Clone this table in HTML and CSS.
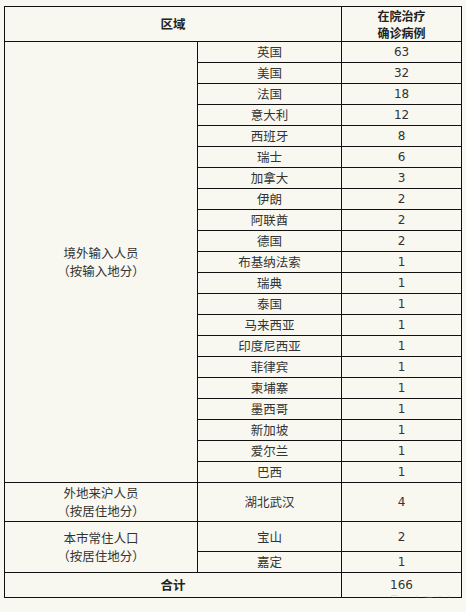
FILE: index.html
```html
<!DOCTYPE html>
<html lang="zh-CN">
<head>
<meta charset="utf-8">
<title>在院治疗确诊病例</title>
<link rel="stylesheet" href="styles.css">
</head>
<body>
<div class="wrap">
<table class="cases">
  <colgroup>
    <col class="c1"><col class="c2"><col class="c3">
  </colgroup>
  <tr class="head">
    <th colspan="2">区域</th>
    <th class="hd2"><span class="hl">在院治疗</span><span class="hl">确诊病例</span></th>
  </tr>
  <tr><td rowspan="21" class="group">境外输入人员<br>（按输入地分）</td><td>英国</td><td class="num">63</td></tr>
  <tr><td>美国</td><td class="num">32</td></tr>
  <tr><td>法国</td><td class="num">18</td></tr>
  <tr><td>意大利</td><td class="num">12</td></tr>
  <tr><td>西班牙</td><td class="num">8</td></tr>
  <tr><td>瑞士</td><td class="num">6</td></tr>
  <tr><td>加拿大</td><td class="num">3</td></tr>
  <tr><td>伊朗</td><td class="num">2</td></tr>
  <tr><td>阿联酋</td><td class="num">2</td></tr>
  <tr><td>德国</td><td class="num">2</td></tr>
  <tr><td>布基纳法索</td><td class="num">1</td></tr>
  <tr><td>瑞典</td><td class="num">1</td></tr>
  <tr><td>泰国</td><td class="num">1</td></tr>
  <tr><td>马来西亚</td><td class="num">1</td></tr>
  <tr><td>印度尼西亚</td><td class="num">1</td></tr>
  <tr><td>菲律宾</td><td class="num">1</td></tr>
  <tr><td>柬埔寨</td><td class="num">1</td></tr>
  <tr><td>墨西哥</td><td class="num">1</td></tr>
  <tr><td>新加坡</td><td class="num">1</td></tr>
  <tr><td>爱尔兰</td><td class="num">1</td></tr>
  <tr><td>巴西</td><td class="num">1</td></tr>
  <tr class="tall"><td class="group">外地来沪人员<br>（按居住地分）</td><td>湖北武汉</td><td class="num">4</td></tr>
  <tr class="mid"><td rowspan="2" class="group">本市常住人口<br>（按居住地分）</td><td>宝山</td><td class="num">2</td></tr>
  <tr><td>嘉定</td><td class="num">1</td></tr>
  <tr class="total"><th colspan="2">合计</th><td class="num tot">166</td></tr>
</table>
<div class="mark"><span class="logo">◎</span>@上海发布</div>
</div>
</body>
</html>
```
FILE: styles.css
```css
html, body {
  margin: 0;
  padding: 0;
  background: #f8f8f0;
}
body {
  font-family: "Noto Sans CJK SC", sans-serif;
  font-size: 12.5px;
  color: #333;
}
.wrap {
  position: relative;
  padding: 6px 0 0 4px;
  width: 458px;
}
.cases {
  border-collapse: collapse;
  width: 457px;
  table-layout: fixed;
}
.c1 { width: 193px; }
.c2 { width: 144px; }
.c3 { width: 120px; }
.cases td, .cases th {
  border: 1px solid #111;
  padding: 0;
  text-align: center;
  vertical-align: middle;
  line-height: 18px;
}
.cases tr { height: 21px; }
.cases tr.head { height: 35px; }
.cases th {
  font-weight: bold;
  color: #222;
}
.cases th.hd2 {
  font-size: 12px;
}
.hl {
  display: block;
  height: 17px;
  line-height: 17px;
  overflow: visible;
}
.cases tr.tall { height: 39px; }
.cases tr.mid { height: 30px; }
.cases tr.total { height: 25px; }
.num {
  font-family: "DejaVu Sans", "Noto Sans CJK SC", sans-serif;
  font-size: 12px;
}
.tot { vertical-align: top; line-height: 20px; }
.group { line-height: 19px; }
.mark {
  position: absolute;
  right: 6px;
  top: 594px;
  font-size: 10px;
  line-height: 12px;
  color: rgba(140, 140, 140, 0.45);
  letter-spacing: 1px;
}
.logo { font-size: 11px; margin-right: 1px; }
```
